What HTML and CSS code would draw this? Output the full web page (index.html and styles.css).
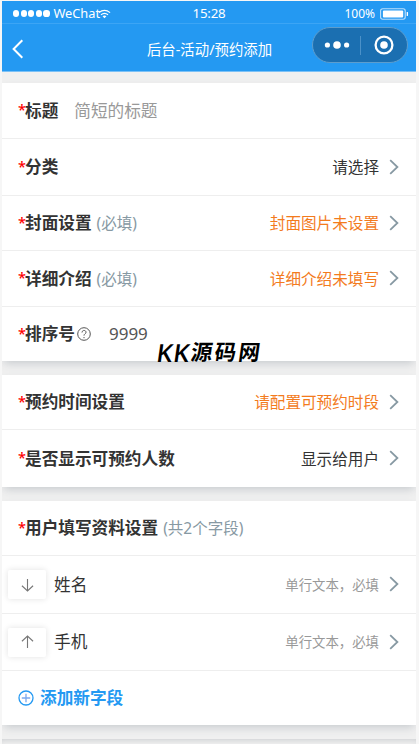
FILE: index.html
```html
<!DOCTYPE html>
<html lang="zh-CN">
<head>
<meta charset="utf-8">
<title>后台-活动/预约添加</title>
<link rel="stylesheet" href="styles.css">
</head>
<body>
<svg class="defs" aria-hidden="true">
  <symbol id="chevron" viewBox="0 0 10 16"><path d="M1.2 1.2 8.4 8 1.2 14.8"/></symbol>
</svg>
<div class="phone">
  <div class="status">
    <div class="carrier">
      <i class="dot"></i><i class="dot"></i><i class="dot"></i><i class="dot"></i><i class="dot"></i>
      <span class="network">WeChat</span>
      <svg class="wifi" viewBox="0 0 14 10"><path d="M1 3.5Q7-1.5 13 3.5M3.2 5.8Q7 2.6 10.8 5.8"/><path class="wifi-core" d="M4.9 7.4Q7 5.8 9.1 7.4L7 9.6Z"/></svg>
    </div>
    <span class="clock">15:28</span>
    <div class="power"><span>100%</span>
      <svg class="battery" viewBox="0 0 30 12"><rect class="shell" x=".6" y=".6" width="25.5" height="10.8" rx="2.2"/><rect class="charge" x="3" y="2.5" width="21" height="7" rx="1"/><path class="cap" d="M28.3 4v4"/></svg>
    </div>
  </div>
  <header class="nav">
    <svg class="back" viewBox="0 0 12 20"><path d="M10.3 1.2 1.6 10l8.7 8.8"/></svg>
    <h1>后台-活动/预约添加</h1>
    <div class="capsule">
      <svg class="more" viewBox="0 0 26 8"><circle cx="3.4" cy="4" r="2.6"/><circle cx="13" cy="4" r="3.8"/><circle cx="22.6" cy="4" r="2.6"/></svg>
      <i class="divider"></i>
      <svg class="target" viewBox="0 0 20 20"><circle class="ring" cx="10" cy="10" r="8.4"/><circle cx="10" cy="10" r="3.8"/></svg>
    </div>
  </header>
  <main>
    <section class="card basics">
      <div class="row"><b class="star">*</b><b class="label">标题</b><span class="placeholder">简短的标题</span></div>
      <div class="row"><b class="star">*</b><b class="label">分类</b><span class="value">请选择</span><svg class="arrow"><use href="#chevron"/></svg></div>
      <div class="row"><b class="star">*</b><b class="label">封面设置</b><span class="note">(必填)</span><span class="value warn">封面图片未设置</span><svg class="arrow"><use href="#chevron"/></svg></div>
      <div class="row"><b class="star">*</b><b class="label">详细介绍</b><span class="note">(必填)</span><span class="value warn">详细介绍未填写</span><svg class="arrow"><use href="#chevron"/></svg></div>
      <div class="row"><b class="star">*</b><b class="label">排序号</b><svg class="help" viewBox="0 0 14 14"><circle cx="7" cy="7" r="6.3"/><path d="M5 5.5C5 2.8 9 2.8 9 5.3 9 6.8 7 6.8 7 8.6M7 10v1.2"/></svg><span class="number">9999</span></div>
      <div class="watermark"><span class="latin">KK</span>源码网</div>
    </section>
    <section class="card booking">
      <div class="row"><b class="star">*</b><b class="label">预约时间设置</b><span class="value warn">请配置可预约时段</span><svg class="arrow"><use href="#chevron"/></svg></div>
      <div class="row"><b class="star">*</b><b class="label">是否显示可预约人数</b><span class="value">显示给用户</span><svg class="arrow"><use href="#chevron"/></svg></div>
    </section>
    <section class="card fields">
      <div class="row"><b class="star">*</b><b class="label">用户填写资料设置</b><span class="note">(共2个字段)</span></div>
      <div class="row field"><span class="move"><svg viewBox="0 0 14 14"><path d="M7 .5v13M1 7.8l6 5.6 6-5.6"/></svg></span><span class="name">姓名</span><span class="value hint">单行文本，必填</span><svg class="arrow"><use href="#chevron"/></svg></div>
      <div class="row field"><span class="move"><svg viewBox="0 0 14 14"><path d="M7 13.5V.5M1 6.2 7 .6l6 5.6"/></svg></span><span class="name">手机</span><span class="value hint">单行文本，必填</span><svg class="arrow"><use href="#chevron"/></svg></div>
      <div class="row add"><svg class="plus" viewBox="0 0 16 16"><circle cx="8" cy="8" r="7"/><path d="M8 3.8v8.4M3.8 8h8.4"/></svg><b>添加新字段</b></div>
    </section>
    <section class="card next"></section>
  </main>
</div>
</body>
</html>
```
FILE: styles.css
```css
* { box-sizing: border-box; }
body {
  margin: 0;
  height: 744px;
  overflow: hidden;
  padding: 1px 3px 0 2px;
  background: #f6f6f6;
  font-family: "Noto Sans", "Noto Sans CJK SC", sans-serif;
  color: #333;
}
svg { display: block; flex: none; fill: none; overflow: visible; }
.defs { position: absolute; width: 0; height: 0; }
.phone { height: 743px; overflow: hidden; background: #f0f0f0; }

.status {
  height: 23px;
  display: grid;
  grid-template-columns: 1fr auto 1fr;
  align-items: center;
  padding: 3px 7px 0 11px;
  background: #2499f2;
  border-bottom: 1px solid #3ca5f5;
  color: #fff;
  font-size: 12.5px;
  line-height: 19px;
}
.carrier, .power { display: flex; align-items: center; }
.carrier { gap: 1.4px; }
.dot { width: 6.2px; height: 6.2px; border-radius: 50%; background: #fff; }
.network { margin-left: 2.5px; font-size: 12.8px; }
.wifi { width: 13px; height: 10px; margin-left: -3px; stroke: #fff; stroke-width: 1.3; }
.wifi-core { fill: #fff; stroke: none; }
.clock { margin-right: 4px; font-size: 13.3px; letter-spacing: -.2px; }
.power { justify-content: flex-end; gap: 5px; font-size: 12px; }
.battery { width: 29px; height: 12px; }
.shell { stroke: #b9defb; stroke-width: 1.2; }
.charge { fill: #fff; }
.cap { stroke: #fff; stroke-width: 1.4; }

.nav {
  height: 48px;
  display: grid;
  grid-template-columns: 1fr auto 1fr;
  align-items: center;
  padding: 0 8px 0 10px;
  background: #2499f2;
  border-bottom: 1px solid #7cc1f6;
  color: #fff;
}
.back { width: 12px; height: 20px; margin-top: 3px; stroke: #fff; stroke-width: 2; }
.nav h1 { margin: 4px 1px 0 0; font-size: 14.4px; font-weight: 400; line-height: 20px; }
.capsule {
  justify-self: end;
  width: 96px;
  height: 36px;
  margin-top: -5px;
  display: flex;
  align-items: center;
  padding: 0 13px 0 11px;
  border: 1px solid #5d9dcd;
  border-radius: 18px;
  background: #1b6fb1;
}
.more { width: 26px; height: 8px; fill: #fff; }
.divider { width: 1px; height: 19px; margin: 0 13px 0 10px; background: #4b91c8; }
.target { width: 20px; height: 20px; fill: #fff; }
.ring { fill: none; stroke: #fff; stroke-width: 2.3; }

main { display: flex; flex-direction: column; gap: 14px; padding-top: 11px; }
.card {
  position: relative;
  display: grid;
  background: #fff;
  box-shadow: 0 4px 9px -2px #c4c8cc;
}
.basics { grid-template-rows: 56px 57px 55px 56px 54px; }
.booking { grid-template-rows: 55px 57px; }
.fields { grid-template-rows: 55px 58px 57px 54px; }
.next { height: 60px; background: #f0f0f0; box-shadow: inset 0 4px 6px -3px #c9cccf; }
.row {
  display: flex;
  align-items: center;
  padding: 0 17px 0 16px;
  border-bottom: 1px solid #eee;
  font-size: 16.65px;
  line-height: 24px;
  white-space: nowrap;
}
.row:last-of-type, .basics .row:nth-child(5) { border-bottom: 0; }
.star { width: 7px; margin-top: -3px; color: #f00; font-size: 14.5px; font-weight: 500; }
.label { font-weight: 700; }
.placeholder { margin-left: 16px; color: #999; }
.note { margin-left: 5px; font-size: 15.5px; color: #8799a3; }
.value { margin-left: auto; font-size: 15.6px; }
.warn { color: #f37b1d; }
.hint { font-size: 13.4px; color: #999; }
.arrow { width: 10px; height: 16px; margin-left: 10px; margin-top: -1px; stroke: #8799a3; stroke-width: 1.8; }
.help { width: 14px; height: 14px; margin-left: 2px; margin-top: -1px; stroke: #555; stroke-width: 1; }
.number { margin-left: 18px; font-size: 17px; color: #555; }
.watermark {
  position: absolute;
  left: 155px;
  top: 254px;
  display: flex;
  align-items: center;
  font-size: 21.5px;
  line-height: 30px;
  font-weight: 700;
  letter-spacing: 2.2px;
  color: #000;
  white-space: nowrap;
  transform: skewX(-8deg);
}
.latin { margin-right: 1px; font-family: "Open Sans", sans-serif; font-size: 25px; font-weight: 600; letter-spacing: .6px; }
.field { padding-left: 6px; }
.move {
  width: 38px;
  height: 29px;
  display: flex;
  align-items: center;
  justify-content: center;
  border-radius: 2px;
  box-shadow: 0 0 6px #e2e2e2;
}
.move svg { width: 13px; height: 14px; stroke: #777; stroke-width: 1.2; }
.name { margin-left: 8px; }
.add { color: #2499f2; }
.plus { width: 16px; height: 16px; margin-right: 6px; stroke: #2499f2; stroke-width: 1.3; }
.plus path { stroke: #7ba9ef; }
```
